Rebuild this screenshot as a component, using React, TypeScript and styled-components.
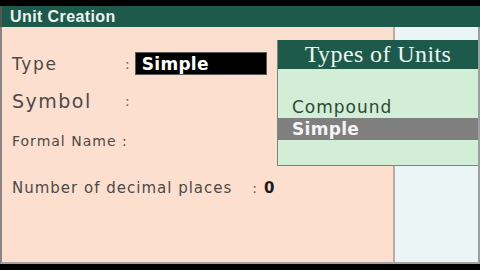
import React from 'react';
import styled, { createGlobalStyle } from 'styled-components';

const GlobalStyle = createGlobalStyle`
  html, body {
    margin: 0;
    padding: 0;
    background: #000;
  }
`;

const StyledScreen = styled.div`
  position: relative;
  width: 480px;
  height: 270px;
  box-sizing: border-box;
  padding: 6px 0 6px;
  background: #000;
  display: flex;
  flex-direction: column;
  overflow: hidden;
`;

const StyledTitleBar = styled.div`
  height: 21px;
  background: #1e5a4b;
  border-left: 2px solid #4a5a55;
  display: flex;
  align-items: center;
  padding-left: 8px;
  font-family: 'Liberation Sans', Arial, sans-serif;
  font-weight: 700;
  font-size: 16px;
  letter-spacing: 0.4px;
  color: #eef4ef;
`;

const StyledBody = styled.div`
  flex: 1;
  display: flex;
  border-left: 2px solid #8c8480;
  border-bottom: 2px solid #a8a09a;
  border-right: 2px solid #9aa0a0;
`;

const StyledFormPanel = styled.div`
  width: 393px;
  background: #fddfd0;
  border-right: 2px solid #b9aca4;
  display: flex;
  flex-direction: column;
  padding: 25px 0 0 10px;
  box-sizing: border-box;
`;

const StyledSidePanel = styled.div`
  flex: 1;
  background: #ecf5f5;
`;

const StyledRow = styled.div<{ $top: number; $height: number }>`
  display: flex;
  align-items: center;
  margin-top: ${(p) => p.$top}px;
  height: ${(p) => p.$height}px;
  font-family: 'DejaVu Sans', Verdana, sans-serif;
  color: #4c4a48;
`;

const StyledLabel = styled.span<{ $size: number; $spacing: number; $width?: number }>`
  font-size: ${(p) => p.$size}px;
  letter-spacing: ${(p) => p.$spacing}px;
  ${(p) => (p.$width ? `width: ${p.$width}px;` : '')}
  white-space: nowrap;
`;

const StyledColon = styled.span<{ $gap?: number }>`
  font-size: 14px;
  color: #6a6664;
  margin-left: ${(p) => p.$gap ?? 0}px;
`;

const StyledValueBox = styled.div`
  margin-left: 5px;
  width: 132px;
  height: 23px;
  box-sizing: border-box;
  background: #000;
  border: 1px solid #5a5a5a;
  display: flex;
  align-items: center;
  padding-left: 6px;
  font-family: 'DejaVu Sans', Verdana, sans-serif;
  font-weight: 700;
  font-size: 17px;
  letter-spacing: 0.3px;
  color: #fff;
`;

const StyledValue = styled.span`
  margin-left: 7px;
  font-family: 'DejaVu Sans', Verdana, sans-serif;
  font-weight: 700;
  font-size: 15px;
  color: #1a1a1a;
`;

const StyledPopup = styled.div`
  position: absolute;
  left: 277px;
  top: 40px;
  width: 201px;
  height: 126px;
  box-sizing: border-box;
  border-left: 1px solid #7a857c;
  border-bottom: 1px solid #7a857c;
  background: #d3eed7;
  display: flex;
  flex-direction: column;
`;

const StyledPopupHeader = styled.div`
  height: 29px;
  background: #1e5a4b;
  display: flex;
  align-items: center;
  justify-content: center;
  font-family: 'Liberation Serif', 'Times New Roman', serif;
  font-size: 24px;
  letter-spacing: 0.4px;
  color: #eef4ef;
`;

const StyledOptions = styled.div`
  display: flex;
  flex-direction: column;
  padding-top: 27px;
`;

const StyledOption = styled.div<{ $active?: boolean }>`
  height: 22px;
  display: flex;
  align-items: center;
  padding-left: 14px;
  font-family: 'DejaVu Sans', Verdana, sans-serif;
  font-size: 17px;
  letter-spacing: ${(p) => (p.$active ? '0.3px' : '1px')};
  font-weight: ${(p) => (p.$active ? 700 : 400)};
  color: ${(p) => (p.$active ? '#f4f4f4' : '#2c4a36')};
  background: ${(p) => (p.$active ? '#7f7f7f' : 'transparent')};
`;

export default function App() {
  return (
    <>
      <GlobalStyle />
      <StyledScreen>
        <StyledTitleBar>Unit Creation</StyledTitleBar>
        <StyledBody>
          <StyledFormPanel>
            <StyledRow $top={0} $height={23}>
              <StyledLabel $size={17} $spacing={1.6} $width={113}>Type</StyledLabel>
              <StyledColon>:</StyledColon>
              <StyledValueBox>Simple</StyledValueBox>
            </StyledRow>
            <StyledRow $top={14} $height={24}>
              <StyledLabel $size={19} $spacing={1.5} $width={113}>Symbol</StyledLabel>
              <StyledColon>:</StyledColon>
            </StyledRow>
            <StyledRow $top={18} $height={20}>
              <StyledLabel $size={14} $spacing={1}>Formal Name :</StyledLabel>
            </StyledRow>
            <StyledRow $top={27} $height={20}>
              <StyledLabel $size={15} $spacing={1}>Number of decimal places</StyledLabel>
              <StyledColon $gap={20}>:</StyledColon>
              <StyledValue>0</StyledValue>
            </StyledRow>
          </StyledFormPanel>
          <StyledSidePanel />
        </StyledBody>
        <StyledPopup>
          <StyledPopupHeader>Types of Units</StyledPopupHeader>
          <StyledOptions>
            <StyledOption>Compound</StyledOption>
            <StyledOption $active>Simple</StyledOption>
          </StyledOptions>
        </StyledPopup>
      </StyledScreen>
    </>
  );
}
